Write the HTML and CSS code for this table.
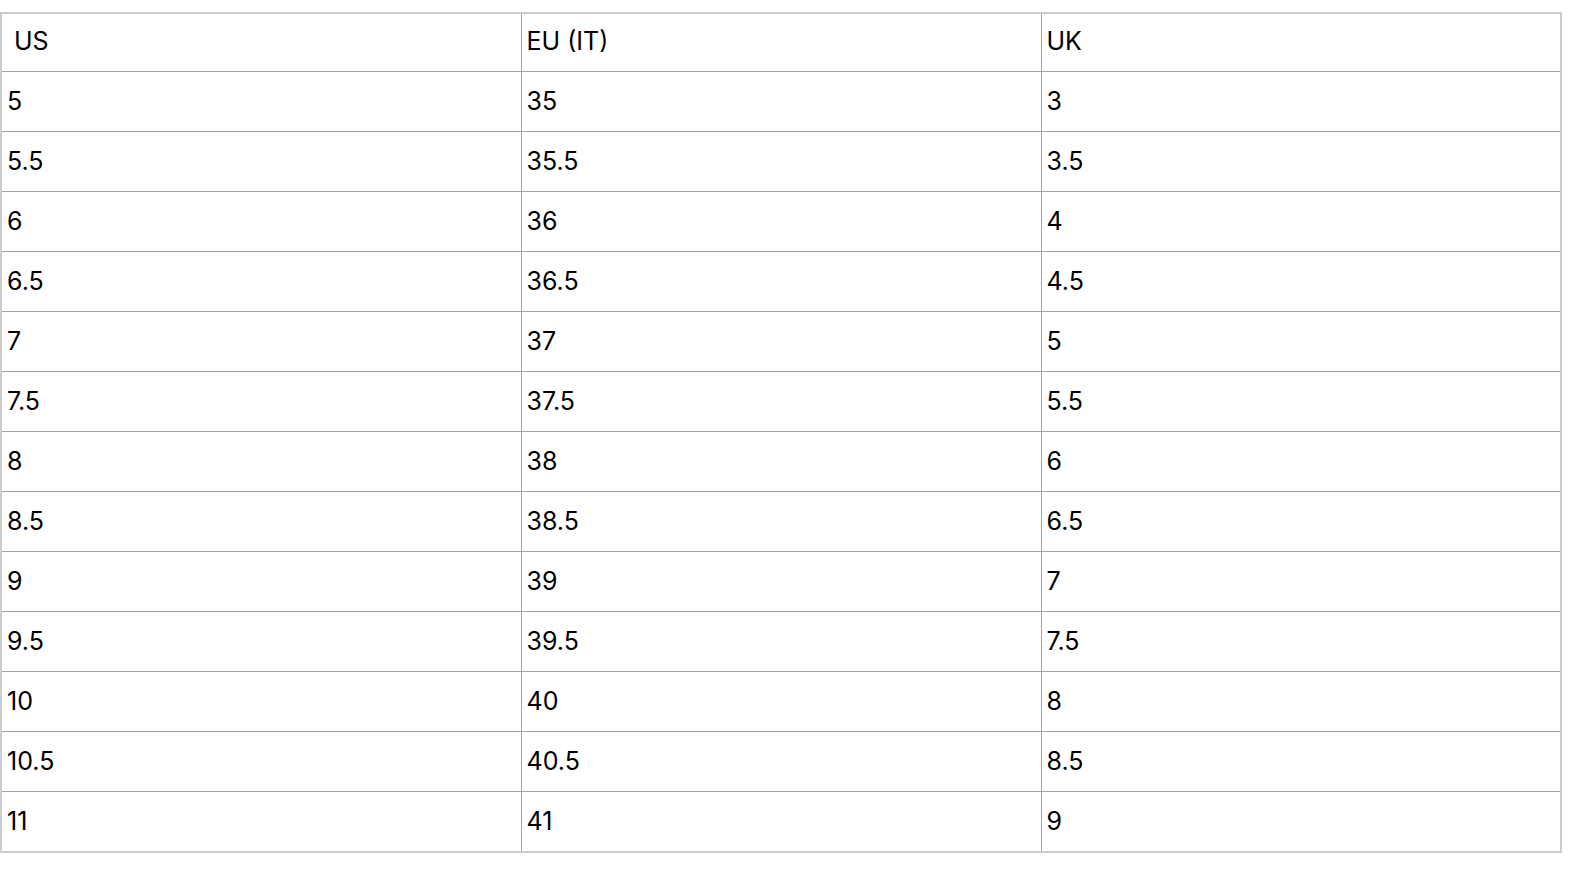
FILE: index.html
```html
<!DOCTYPE html>
<html>
<head>
<meta charset="utf-8">
<link rel="stylesheet" href="styles.css">
</head>
<body>
<table class="size-table">
  <thead>
    <tr><th class="first">US</th><th>EU (IT)</th><th>UK</th></tr>
  </thead>
  <tbody>
    <tr><td>5</td><td>35</td><td>3</td></tr>
    <tr><td>5.5</td><td>35.5</td><td>3.5</td></tr>
    <tr><td>6</td><td>36</td><td>4</td></tr>
    <tr><td>6.5</td><td>36.5</td><td>4.5</td></tr>
    <tr><td>7</td><td>37</td><td>5</td></tr>
    <tr><td>7.5</td><td>37.5</td><td>5.5</td></tr>
    <tr><td>8</td><td>38</td><td>6</td></tr>
    <tr><td>8.5</td><td>38.5</td><td>6.5</td></tr>
    <tr><td>9</td><td>39</td><td>7</td></tr>
    <tr><td>9.5</td><td>39.5</td><td>7.5</td></tr>
    <tr><td>10</td><td>40</td><td>8</td></tr>
    <tr><td>10.5</td><td>40.5</td><td>8.5</td></tr>
    <tr class="last"><td>11</td><td>41</td><td>9</td></tr>
  </tbody>
</table>
</body>
</html>
```
FILE: styles.css
```css
html, body {
  margin: 0;
  padding: 0;
  background: #fff;
}
body {
  padding-top: 12px;
  font-family: "Inter", "Open Sans", sans-serif;
  color: #000;
}
.size-table {
  width: 1562px;
  border-collapse: collapse;
  border: 2px solid #cccccc;
  table-layout: fixed;
}
.size-table th,
.size-table td {
  height: 60px;
  box-sizing: border-box;
  border: 1px solid #a3a3a3;
  padding: 0 0 1px 5px;
  text-align: left;
  vertical-align: middle;
  font-weight: normal;
  font-size: 25px;
  line-height: 30px;
}
.size-table thead th {
  height: 58px;
  padding-bottom: 2px;
}
.size-table tr.last td {
  height: 61px;
}
.size-table th.first {
  padding-left: 12px;
}
```
